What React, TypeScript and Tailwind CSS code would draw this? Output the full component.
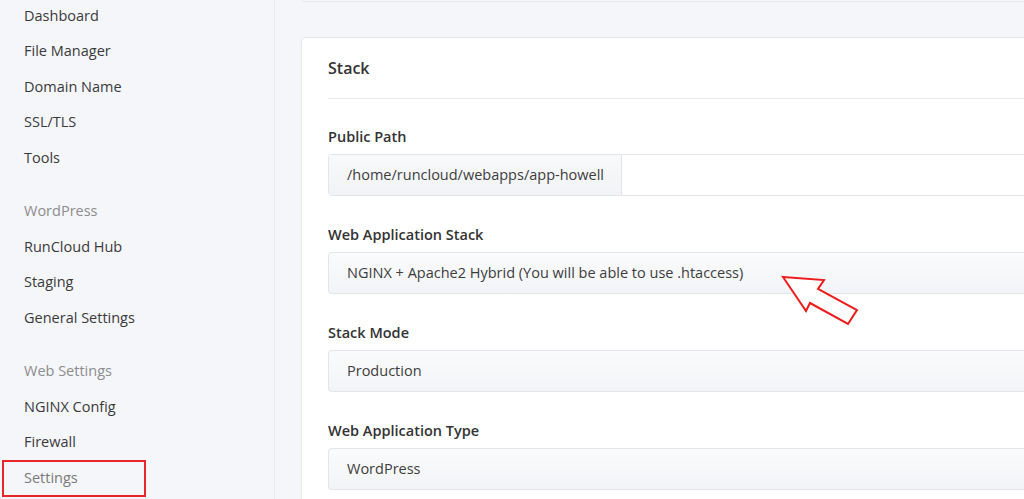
import React from "react";

const groups: { title?: string; items: string[] }[] = [
  { items: ["Dashboard", "File Manager", "Domain Name", "SSL/TLS", "Tools"] },
  { title: "WordPress", items: ["RunCloud Hub", "Staging", "General Settings"] },
  { title: "Web Settings", items: ["NGINX Config", "Firewall", "Settings"] },
];

function Field({ label, value }: { label: string; value: string }) {
  return (
    <div className="mb-[30px]">
      <div className="h-[18px] leading-[18px] text-[14.5px] font-semibold text-[#333]">{label}</div>
      <div className="mt-[8px] h-[42px] flex items-center rounded-l-[4px] border border-r-0 border-[#e3e5eb] bg-gradient-to-b from-[#fafbfc] to-[#f3f4f7] pl-[18px] text-[14.5px] text-[#3d3d3d]">
        {value}
      </div>
    </div>
  );
}

export default function App() {
  return (
    <div
      className="relative flex h-[499px] w-[1024px] overflow-hidden bg-[#f5f6fa]"
      style={{ fontFamily: '"Open Sans", "Noto Sans", sans-serif' }}
    >
      <aside className="w-[275px] shrink-0 border-r border-[#e9eaef] bg-[#f5f6fa] pl-[24px] -mt-[2px]">
        {groups.map((g, gi) => (
          <div key={gi} className={gi > 0 ? "mt-[18px]" : ""}>
            {g.title && (
              <div className="h-[35.5px] flex items-center text-[14.5px] text-[#8c8c8c]">{g.title}</div>
            )}
            {g.items.map((it) => (
              <div
                key={it}
                className={
                  "relative h-[35.5px] flex items-center text-[14.5px] " +
                  (it === "Settings" ? "text-[#7a7a7a]" : "text-[#3a3a3a]")
                }
              >
                {it}
                {it === "Settings" && (
                  <span className="absolute left-[-22px] top-[0px] h-[37px] w-[144px] border-2 border-[#e8262a]" />
                )}
              </div>
            ))}
          </div>
        ))}
      </aside>

      <main className="w-[749px] shrink-0 pl-[26px]">
        <div className="-mt-[10px] h-[12px] w-[800px] rounded-b-[4px] border border-[#e6e8ee] bg-[#f5f6fa]" />
        <div className="mt-[35px] h-[500px] w-[800px] rounded-l-[5px] border border-r-0 border-[#e6e8ee] bg-white pl-[26px]">
          <div className="flex h-[61px] items-center border-b border-[#e6e8ee] text-[16px] font-semibold text-[#333]">
            Stack
          </div>
          <div className="pt-[29px]">
            <div className="mb-[30px]">
              <div className="h-[18px] leading-[18px] text-[14.5px] font-semibold text-[#333]">Public Path</div>
              <div className="mt-[8px] flex h-[42px] rounded-l-[4px] border border-r-0 border-[#e3e5eb] bg-white">
                <div className="flex w-[293px] items-center border-r border-[#e3e5eb] bg-gradient-to-b from-[#f8f9fa] to-[#f2f3f6] pl-[18px] text-[14.5px] text-[#3d3d3d]">
                  /home/runcloud/webapps/app-howell
                </div>
              </div>
            </div>
            <Field label="Web Application Stack" value="NGINX + Apache2 Hybrid (You will be able to use .htaccess)" />
            <Field label="Stack Mode" value="Production" />
            <Field label="Web Application Type" value="WordPress" />
          </div>
        </div>
      </main>

      <svg className="absolute left-0 top-0 pointer-events-none" width="1024" height="499">
        <polygon
          points="783,277 824,280 818,289 857,310 848,324 810,303 806,311"
          fill="white"
          stroke="#f01c1c"
          strokeWidth="2"
          strokeLinejoin="miter"
        />
      </svg>
    </div>
  );
}
